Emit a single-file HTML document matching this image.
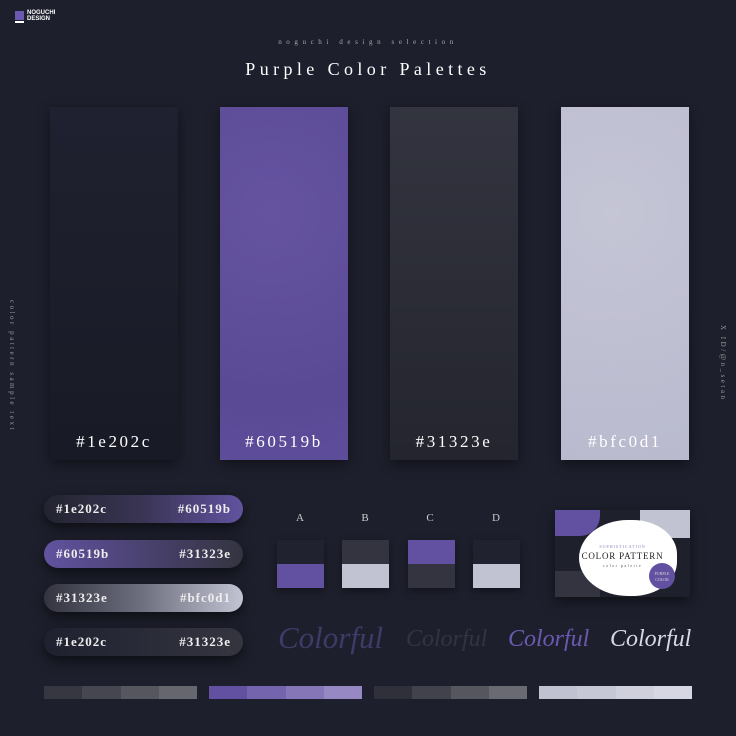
<!DOCTYPE html>
<html><head><meta charset="utf-8"><style>
*{margin:0;padding:0;box-sizing:border-box}
body{width:736px;height:736px;background:#1d1f2c;position:relative;overflow:hidden;font-family:"Liberation Serif",serif;color:#fff}
.a{position:absolute}
.panel{position:absolute;top:107px;width:128px;height:353px;box-shadow:0 4px 12px rgba(0,0,0,.45)}
.panel span{position:absolute;left:0;right:0;bottom:8px;text-align:center;font-size:17px;letter-spacing:2.6px;color:#fff}
.pill{position:absolute;left:44px;width:199px;height:28px;border-radius:14px;box-shadow:0 5px 12px rgba(0,0,0,.55);font-size:13.5px;letter-spacing:1px;line-height:28px;padding:0 12px;display:flex;justify-content:space-between;color:#eee}
.pill b{font-weight:bold;font-size:13px}
.lt{position:absolute;top:512px;font-size:11px;color:#ccc;width:20px;text-align:center}
.sq{position:absolute;top:540px;width:47px;height:48px;background:#202230;box-shadow:0 3px 8px rgba(0,0,0,.4)}
.sq div{position:absolute;left:0;width:47px;height:24px}
.cf{position:absolute;top:620px;font-style:italic;font-size:30px;font-family:"Liberation Serif",serif}
.strip{position:absolute;top:686px;height:13px;width:153px;display:flex}
.strip div{flex:1}
</style></head><body>
<div class="a" style="left:15px;top:11px;width:9px;height:9px;background:#6b58b0"></div>
<div class="a" style="left:15px;top:21px;width:9px;height:2px;background:#fff"></div>
<div class="a" style="left:27px;top:10px;font:bold 6px 'Liberation Sans',sans-serif;line-height:6px;color:#fff">NOGUCHI<br>DESIGN</div>
<div class="a" style="left:0;width:736px;top:38px;text-align:center;font-size:7px;letter-spacing:4.6px;color:#aaa">noguchi design selection</div>
<div class="a" style="left:0;width:736px;top:59px;text-align:center;font-size:18px;letter-spacing:4.4px;color:#fff">Purple Color Palettes</div>
<div class="a" style="left:8px;top:300px;font-size:7px;letter-spacing:2.5px;color:#999;writing-mode:vertical-rl">color pattern sample text</div>
<div class="a" style="left:719px;top:325px;font-size:7px;letter-spacing:2.5px;color:#999;writing-mode:vertical-rl">X ID/@n_setan</div>

<div class="panel" style="left:50px;background:linear-gradient(180deg,#1f2130,#181a25)"><span>#1e202c</span></div>
<div class="panel" style="left:220px;background:radial-gradient(circle at 40% 30%,#6553a0,#5a4a95 70%,#5c4c9a)"><span>#60519b</span></div>
<div class="panel" style="left:390px;background:linear-gradient(180deg,#33343f,#24252e)"><span>#31323e</span></div>
<div class="panel" style="left:561px;background:radial-gradient(circle at 40% 30%,#c4c5d5,#b9bace)"><span>#bfc0d1</span></div>

<div class="pill" style="top:495px;background:linear-gradient(90deg,#22242f,#3a3555 50%,#6252a0)"><b>#1e202c</b><b>#60519b</b></div>
<div class="pill" style="top:540px;background:linear-gradient(90deg,#6252a0,#4a4270 50%,#343440)"><b>#60519b</b><b>#31323e</b></div>
<div class="pill" style="top:584px;background:linear-gradient(90deg,#33343f,#6f7080 50%,#c3c4d3)"><b>#31323e</b><b>#bfc0d1</b></div>
<div class="pill" style="top:628px;background:linear-gradient(90deg,#1f2130,#34353f)"><b>#1e202c</b><b>#31323e</b></div>

<div class="lt" style="left:290px">A</div><div class="lt" style="left:355px">B</div><div class="lt" style="left:420px">C</div><div class="lt" style="left:486px">D</div>
<div class="sq" style="left:277px"><div style="top:24px;background:#6151a0"></div></div>
<div class="sq" style="left:342px"><div style="top:0;background:#33343f"></div><div style="top:24px;background:#c1c2d2"></div></div>
<div class="sq" style="left:408px"><div style="top:0;background:#6151a0"></div><div style="top:24px;background:#33343f"></div></div>
<div class="sq" style="left:473px"><div style="top:24px;background:#c1c2d2"></div></div>

<div class="a" style="left:555px;top:510px;width:135px;height:87px;background:#1e202c;overflow:hidden;box-shadow:0 4px 12px rgba(0,0,0,.5)">
<div class="a" style="left:0;top:0;width:45px;height:26px;background:#6151a0;border-radius:0 0 20px 0"></div>
<div class="a" style="right:0;top:0;width:50px;height:28px;background:#c1c2d2;border-radius:0 0 0 18px"></div>
<div class="a" style="left:0;bottom:0;width:45px;height:26px;background:#33343f;border-radius:0 18px 0 0"></div>
<div class="a" style="left:24px;top:10px;width:98px;height:76px;background:#fff;border-radius:50% 45% 45% 50%"></div>
<div class="a" style="left:0;width:135px;top:34px;text-align:center;font-size:4px;letter-spacing:1px;color:#8a7fb8">SOPHISTICATION</div>
<div class="a" style="left:0;width:135px;top:41px;text-align:center;font-size:9px;letter-spacing:.8px;color:#222">COLOR PATTERN</div>
<div class="a" style="left:0;width:135px;top:53px;text-align:center;font-size:4px;letter-spacing:1.5px;color:#555">color palette</div>
<div class="a" style="left:94px;top:53px;width:26px;height:26px;border-radius:50%;background:#6151a0;font-size:4px;color:#ddd;text-align:center;line-height:6px;padding-top:8px">PURPLE<br>COLOR</div>
</div>

<div class="cf" style="left:278px;color:#3f3b66;font-size:31px">Colorful</div>
<div class="cf" style="left:406px;color:#33343f;font-size:24px;top:626px">Colorful</div>
<div class="cf" style="left:508px;color:#6a5bb0;font-size:24px;top:626px">Colorful</div>
<div class="cf" style="left:610px;color:#d8d8e6;font-size:24px;top:626px">Colorful</div>

<div class="strip" style="left:44px"><div style="background:#363740"></div><div style="background:#45464f"></div><div style="background:#55565e"></div><div style="background:#65666e"></div></div>
<div class="strip" style="left:209px"><div style="background:#6151a0"></div><div style="background:#7464ad"></div><div style="background:#8576b8"></div><div style="background:#9688c2"></div></div>
<div class="strip" style="left:374px"><div style="background:#2f3039"></div><div style="background:#41424b"></div><div style="background:#55565e"></div><div style="background:#6a6b72"></div></div>
<div class="strip" style="left:539px"><div style="background:#c0c1d1"></div><div style="background:#c7c8d6"></div><div style="background:#cfd0dc"></div><div style="background:#d6d7e2"></div></div>
</body></html>
